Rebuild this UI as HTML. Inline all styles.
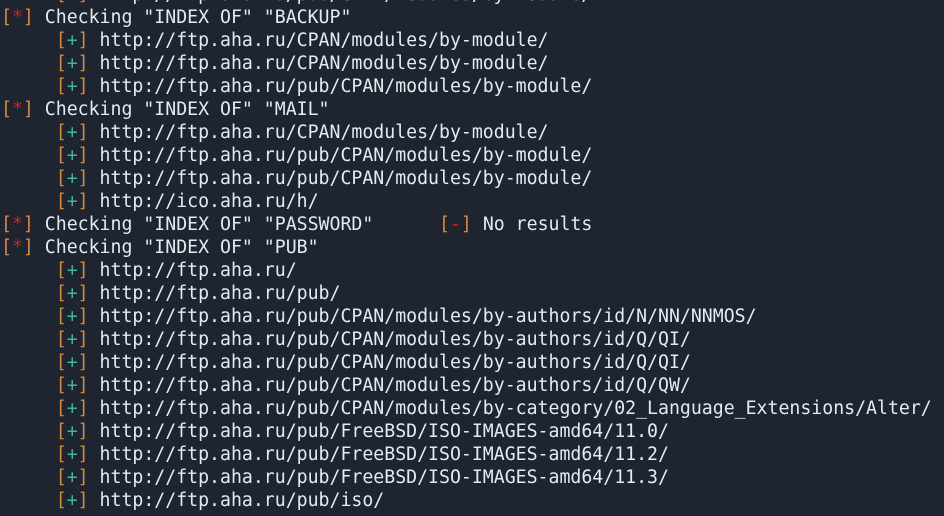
<!DOCTYPE html>
<html><head><style>
html,body{margin:0;padding:0;background:#1e2530;width:944px;height:516px;overflow:hidden}
pre{margin:0;position:absolute;left:1px;top:-17px;font-family:"DejaVu Sans Mono","Liberation Mono",monospace;font-size:18.2px;line-height:23px;color:#e4eaf0}
.b{color:#d3893f}.r{color:#d41f1f}.g{color:#3dbb8d}
</style></head><body>
<pre>     <span class="b">[</span><span class="g">+</span><span class="b">]</span> http://ftp.aha.ru/pub/CPAN/modules/by-module/
<span class="b">[</span><span class="r">*</span><span class="b">]</span> Checking "INDEX OF" "BACKUP"
     <span class="b">[</span><span class="g">+</span><span class="b">]</span> http://ftp.aha.ru/CPAN/modules/by-module/
     <span class="b">[</span><span class="g">+</span><span class="b">]</span> http://ftp.aha.ru/CPAN/modules/by-module/
     <span class="b">[</span><span class="g">+</span><span class="b">]</span> http://ftp.aha.ru/pub/CPAN/modules/by-module/
<span class="b">[</span><span class="r">*</span><span class="b">]</span> Checking "INDEX OF" "MAIL"
     <span class="b">[</span><span class="g">+</span><span class="b">]</span> http://ftp.aha.ru/CPAN/modules/by-module/
     <span class="b">[</span><span class="g">+</span><span class="b">]</span> http://ftp.aha.ru/pub/CPAN/modules/by-module/
     <span class="b">[</span><span class="g">+</span><span class="b">]</span> http://ftp.aha.ru/pub/CPAN/modules/by-module/
     <span class="b">[</span><span class="g">+</span><span class="b">]</span> http://ico.aha.ru/h/
<span class="b">[</span><span class="r">*</span><span class="b">]</span> Checking "INDEX OF" "PASSWORD"      <span class="b">[</span><span class="r">-</span><span class="b">]</span> No results
<span class="b">[</span><span class="r">*</span><span class="b">]</span> Checking "INDEX OF" "PUB"
     <span class="b">[</span><span class="g">+</span><span class="b">]</span> http://ftp.aha.ru/
     <span class="b">[</span><span class="g">+</span><span class="b">]</span> http://ftp.aha.ru/pub/
     <span class="b">[</span><span class="g">+</span><span class="b">]</span> http://ftp.aha.ru/pub/CPAN/modules/by-authors/id/N/NN/NNMOS/
     <span class="b">[</span><span class="g">+</span><span class="b">]</span> http://ftp.aha.ru/pub/CPAN/modules/by-authors/id/Q/QI/
     <span class="b">[</span><span class="g">+</span><span class="b">]</span> http://ftp.aha.ru/pub/CPAN/modules/by-authors/id/Q/QI/
     <span class="b">[</span><span class="g">+</span><span class="b">]</span> http://ftp.aha.ru/pub/CPAN/modules/by-authors/id/Q/QW/
     <span class="b">[</span><span class="g">+</span><span class="b">]</span> http://ftp.aha.ru/pub/CPAN/modules/by-category/02_Language_Extensions/Alter/
     <span class="b">[</span><span class="g">+</span><span class="b">]</span> http://ftp.aha.ru/pub/FreeBSD/ISO-IMAGES-amd64/11.0/
     <span class="b">[</span><span class="g">+</span><span class="b">]</span> http://ftp.aha.ru/pub/FreeBSD/ISO-IMAGES-amd64/11.2/
     <span class="b">[</span><span class="g">+</span><span class="b">]</span> http://ftp.aha.ru/pub/FreeBSD/ISO-IMAGES-amd64/11.3/
     <span class="b">[</span><span class="g">+</span><span class="b">]</span> http://ftp.aha.ru/pub/iso/
</pre>
</body></html>
